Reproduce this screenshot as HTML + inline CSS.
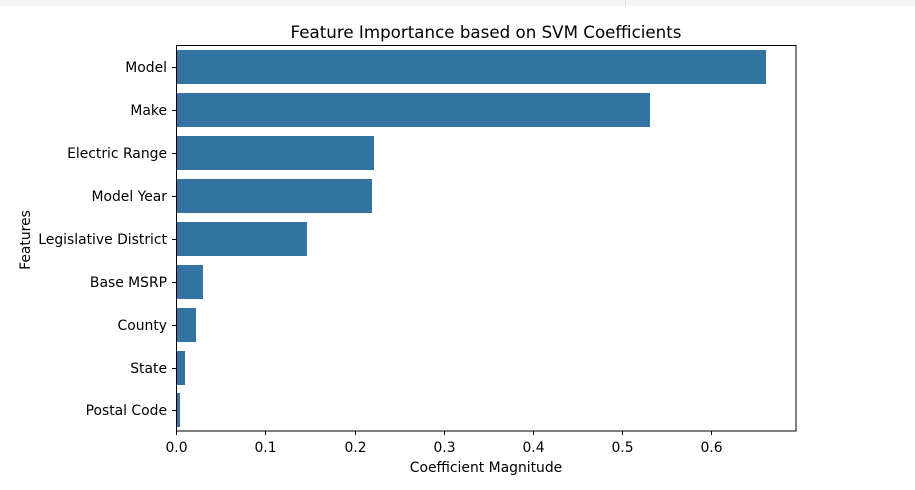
<!DOCTYPE html>
<html><head><meta charset="utf-8"><style>
html,body{margin:0;padding:0;background:#fff;width:915px;height:490px;overflow:hidden}
svg text{font-family:"DejaVu Sans",sans-serif;fill:#000}
</style></head><body>
<svg width="915" height="490" xmlns="http://www.w3.org/2000/svg">
<rect x="0" y="0" width="915" height="6" fill="#f5f5f5"/>
<rect x="625" y="0" width="1" height="6" fill="#dcdcdc"/>
<text x="486" y="38" font-size="16.7" text-anchor="middle">Feature Importance based on SVM Coefficients</text>
<g fill="#3274a1">
<rect x="176" y="50" width="590" height="34"/>
<rect x="176" y="93" width="474" height="34"/>
<rect x="176" y="136" width="198" height="34"/>
<rect x="176" y="179" width="196" height="34"/>
<rect x="176" y="222" width="131" height="34"/>
<rect x="176" y="265" width="27" height="34"/>
<rect x="176" y="308" width="20" height="34"/>
<rect x="176" y="351" width="9" height="34"/>
<rect x="176" y="393" width="4" height="34"/>
</g>
<rect x="176.5" y="45.5" width="619.5" height="385.5" fill="none" stroke="#000" stroke-width="1"/>
<g stroke="#000" stroke-width="1">
<line x1="172" x2="176" y1="67.5" y2="67.5"/><line x1="172" x2="176" y1="110.5" y2="110.5"/>
<line x1="172" x2="176" y1="153.5" y2="153.5"/><line x1="172" x2="176" y1="196.5" y2="196.5"/>
<line x1="172" x2="176" y1="239.5" y2="239.5"/><line x1="172" x2="176" y1="282.5" y2="282.5"/>
<line x1="172" x2="176" y1="325.5" y2="325.5"/><line x1="172" x2="176" y1="368.5" y2="368.5"/>
<line x1="172" x2="176" y1="410.5" y2="410.5"/>
<line y1="431" y2="435" x1="176.5" x2="176.5"/><line y1="431" y2="435" x1="265.5" x2="265.5"/>
<line y1="431" y2="435" x1="355.5" x2="355.5"/><line y1="431" y2="435" x1="444.5" x2="444.5"/>
<line y1="431" y2="435" x1="533.5" x2="533.5"/><line y1="431" y2="435" x1="622.5" x2="622.5"/>
<line y1="431" y2="435" x1="711.5" x2="711.5"/>
</g>
<g font-size="13.9" text-anchor="end">
<text x="167" y="72">Model</text><text x="167" y="115">Make</text>
<text x="167" y="158">Electric Range</text><text x="167" y="201">Model Year</text>
<text x="167" y="244">Legislative District</text><text x="167" y="287">Base MSRP</text>
<text x="167" y="330">County</text><text x="167" y="373">State</text>
<text x="167" y="415">Postal Code</text>
</g>
<g font-size="13.9" text-anchor="middle">
<text x="176.5" y="452">0.0</text><text x="265.5" y="452">0.1</text><text x="355.5" y="452">0.2</text>
<text x="444.5" y="452">0.3</text><text x="533.5" y="452">0.4</text><text x="622.5" y="452">0.5</text>
<text x="711.5" y="452">0.6</text>
<text x="486" y="472">Coefficient Magnitude</text>
<text transform="translate(30,240) rotate(-90)">Features</text>
</g>
</svg>
</body></html>
